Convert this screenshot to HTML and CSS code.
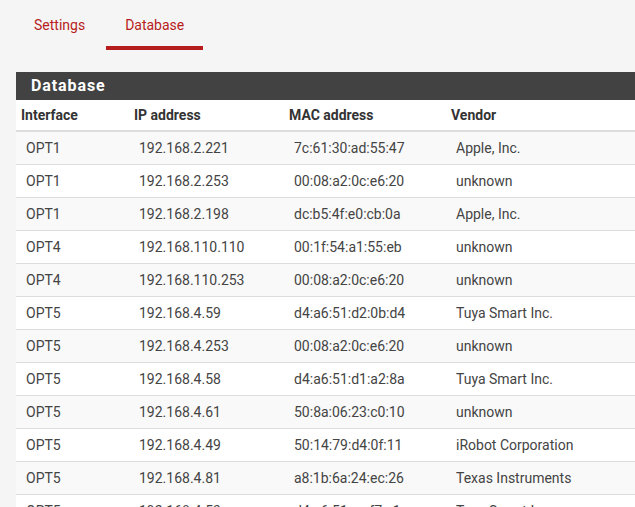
FILE: index.html
```html
<!DOCTYPE html>
<html>
<head>
<meta charset="utf-8">
<link rel="stylesheet" href="styles.css">
</head>
<body>
<ul class="tabs">
  <li class="tab">Settings</li>
  <li class="tab active">Database</li>
</ul>
<div class="panel">
  <div class="panel-heading">Database</div>
  <table class="table">
    <thead>
      <tr><th class="c1">Interface</th><th class="c2">IP address</th><th class="c3">MAC address</th><th>Vendor</th></tr>
    </thead>
    <tbody>
      <tr><td>OPT1</td><td>192.168.2.221</td><td>7c:61:30:ad:55:47</td><td>Apple, Inc.</td></tr>
      <tr><td>OPT1</td><td>192.168.2.253</td><td>00:08:a2:0c:e6:20</td><td>unknown</td></tr>
      <tr><td>OPT1</td><td>192.168.2.198</td><td>dc:b5:4f:e0:cb:0a</td><td>Apple, Inc.</td></tr>
      <tr><td>OPT4</td><td>192.168.110.110</td><td>00:1f:54:a1:55:eb</td><td>unknown</td></tr>
      <tr><td>OPT4</td><td>192.168.110.253</td><td>00:08:a2:0c:e6:20</td><td>unknown</td></tr>
      <tr><td>OPT5</td><td>192.168.4.59</td><td>d4:a6:51:d2:0b:d4</td><td>Tuya Smart Inc.</td></tr>
      <tr><td>OPT5</td><td>192.168.4.253</td><td>00:08:a2:0c:e6:20</td><td>unknown</td></tr>
      <tr><td>OPT5</td><td>192.168.4.58</td><td>d4:a6:51:d1:a2:8a</td><td>Tuya Smart Inc.</td></tr>
      <tr><td>OPT5</td><td>192.168.4.61</td><td>50:8a:06:23:c0:10</td><td>unknown</td></tr>
      <tr><td>OPT5</td><td>192.168.4.49</td><td>50:14:79:d4:0f:11</td><td>iRobot Corporation</td></tr>
      <tr><td>OPT5</td><td>192.168.4.81</td><td>a8:1b:6a:24:ec:26</td><td>Texas Instruments</td></tr>
      <tr><td>OPT5</td><td>192.168.4.53</td><td>d4:a6:51:ce:f7:e1</td><td>Tuya Smart Inc.</td></tr>
    </tbody>
  </table>
</div>
</body>
</html>
```
FILE: styles.css
```css
html, body {
  margin: 0;
  padding: 0;
  background: #f5f5f5;
  font-family: Roboto, "Liberation Sans", sans-serif;
  overflow: hidden;
}
body {
  height: 507px;
}
.tabs {
  list-style: none;
  margin: 0;
  padding: 0 0 0 15px;
  display: flex;
  gap: 2px;
  height: 72px;
  box-sizing: border-box;
}
.tab {
  padding: 16px 19px 0;
  height: 50px;
  box-sizing: border-box;
  font-size: 14px;
  color: #b71c1c;
  line-height: 18px;
  border-bottom: 4px solid transparent;
}
.tab.active {
  border-bottom-color: #b71c1c;
}
.panel {
  margin-left: 16px;
  width: 640px;
  background: #fff;
}
.panel-heading {
  background: #424242;
  color: #fff;
  height: 28px;
  line-height: 28px;
  padding-left: 15px;
  font-size: 16px;
  font-weight: 700;
  letter-spacing: 0.9px;
}
.table {
  width: 100%;
  border-collapse: collapse;
  font-size: 14px;
  color: #444;
}
.table th {
  text-align: left;
  font-weight: 700;
  color: #333;
  height: 30px;
  padding: 0 0 0 5px;
  border-bottom: 2px solid #ddd;
  font-size: 14px;
}
.c1 { width: 108px; }
.c2 { width: 150px; }
.c3 { width: 157px; }
.table td {
  padding: 0 0 0 10px;
  height: 32px;
  border-bottom: 1px solid #ddd;
}
.table tbody tr:nth-child(odd) {
  background: #f9f9f9;
}
```
